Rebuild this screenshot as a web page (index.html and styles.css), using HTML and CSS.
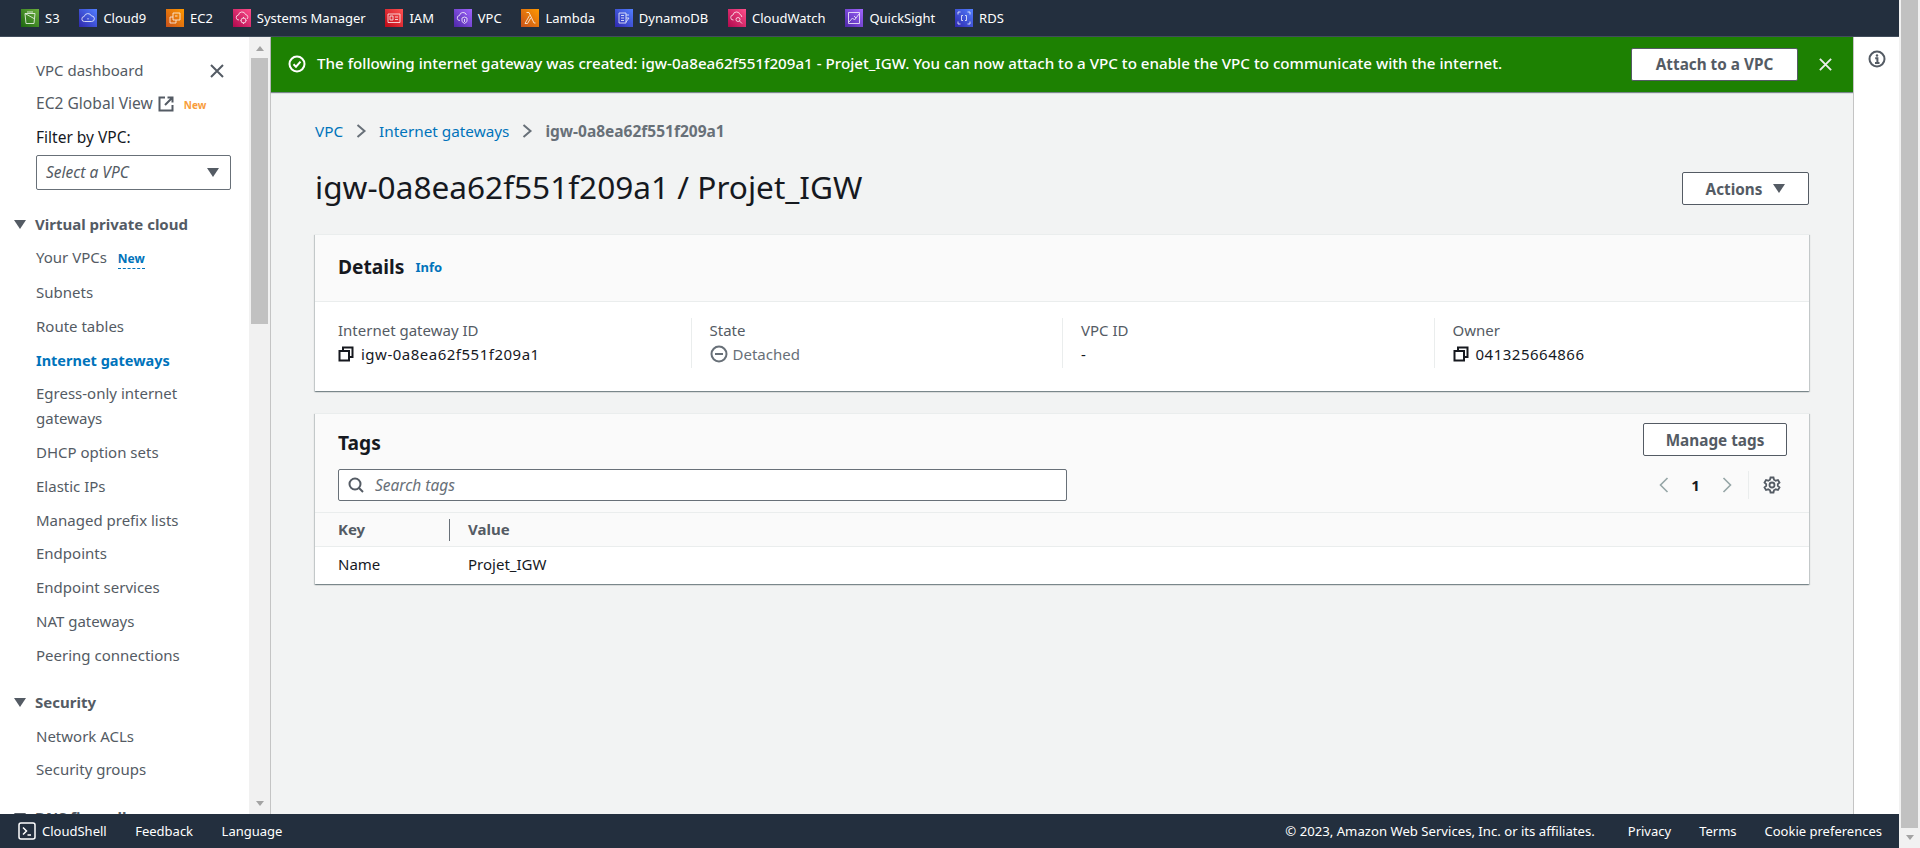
FILE: index.html
```html
<!DOCTYPE html>
<html lang="en">

<head>
    <meta charset="UTF-8">
    <meta name="viewport" content="width=device-width, initial-scale=1.0">
    <title>igw-0a8ea62f551f209a1 / Projet_IGW</title>
    <link rel="stylesheet" href="styles.css">
</head>

<body>
    <div class="app">
        <header class="topbar">
            <a class="service"><span class="svc green"><svg viewBox="0 0 18 18"><path d="M4 4.5h10l-1 10H5zM4 4.5l9 5" /><path d="M6 3h6" /></svg></span>S3</a>
            <a class="service"><span class="svc blue"><svg viewBox="0 0 18 18"><path d="M5.5 12.5a2.5 2.5 0 0 1-.3-5 3.8 3.8 0 0 1 7.2-.6 2.8 2.8 0 0 1 .3 5.6z" /><path d="M9 10.5V9" /></svg></span>Cloud9</a>
            <a class="service"><span class="svc orange"><svg viewBox="0 0 18 18"><path d="M7 4h7v7H7z" /><path d="M9 7h2.5" /><path d="M4 8h3M4 8v6h6v-3" /></svg></span>EC2</a>
            <a class="service"><span class="svc pink"><svg viewBox="0 0 18 18"><path d="M6 11a2.5 2.5 0 0 1-.5-5 3.6 3.6 0 0 1 7-.5 2.6 2.6 0 0 1 1.5 4.5" /><circle cx="10.5" cy="11.5" r="2.5" /><path d="M10.5 8v1.5M10.5 13.5V15M7.5 11.5h1M12.5 11.5h1" /></svg></span>Systems Manager</a>
            <a class="service"><span class="svc red"><svg viewBox="0 0 18 18"><path d="M3 5h12v8.5H3z" /><path d="M5 7h3v4H5zM10 8h3M10 10.5h3" /></svg></span>IAM</a>
            <a class="service"><span class="svc purple"><svg viewBox="0 0 18 18"><path d="M6 11.5a2.5 2.5 0 0 1-.5-5 3.6 3.6 0 0 1 7-.5" /><path d="M8 9l2.5-1 2.5 1v3.5l-2.5 2-2.5-2z" /><path d="M10.5 10v3" /></svg></span>VPC</a>
            <a class="service"><span class="svc orange"><svg viewBox="0 0 18 18"><path d="M5.5 3.5H8l5 10.5h1.5M8.5 6.5L4 14.5h2.5l3.2-5.5" /></svg></span>Lambda</a>
            <a class="service"><span class="svc blue"><svg viewBox="0 0 18 18"><path d="M4 4h7v10H4zM6 6.5h3M6 9h3M6 11.5h3" /><path d="M11 6h3M11 9h3l-3 4" /></svg></span>DynamoDB</a>
            <a class="service"><span class="svc pink"><svg viewBox="0 0 18 18"><path d="M5.5 11a2.5 2.5 0 0 1-.5-5 3.6 3.6 0 0 1 7-.5 2.6 2.6 0 0 1 1.8 2.5" /><circle cx="10" cy="10.5" r="2" /><path d="M11.5 12l2.5 2.5" /></svg></span>CloudWatch</a>
            <a class="service"><span class="svc purple"><svg viewBox="0 0 18 18"><path d="M3.5 3.5h11v11h-11z" /><path d="M4 13l3.5-4 2 2 4.5-6M9 7l2 2" /></svg></span>QuickSight</a>
            <a class="service"><span class="svc blue"><svg viewBox="0 0 18 18"><path d="M3 5.5V3h2.5M12.5 3H15v2.5M15 12.5V15h-2.5M5.5 15H3v-2.5" /><path d="M8 6.5H6.5v5H8M10 6.5h1.5v5H10" /></svg></span>RDS</a>
        </header>

        <div class="main">
            <aside class="sidebar">
                <nav class="side-nav">
                    <div class="nav-row">
                        <a class="nav-item">VPC dashboard</a>
                        <svg class="side-close" viewBox="0 0 16 16"><path d="M2 2l12 12M14 2L2 14" /></svg>
                    </div>
                    <a class="nav-item global">EC2 Global View
                        <svg class="external" viewBox="0 0 16 16"><path d="M7 1.5H1.5v13h13V9" /><path d="M9.5 1.5h5v5M14.5 1.5L7 9" /></svg>
                        <span class="new-orange">New</span>
                    </a>
                    <label class="filter-label">Filter by VPC:</label>
                    <div class="select-box"><span>Select a VPC</span><i class="caret"></i></div>

                    <h3 class="nav-head first"><i class="caret"></i>Virtual private cloud</h3>
                    <a class="nav-item">Your VPCs <span class="new-blue">New</span></a>
                    <a class="nav-item">Subnets</a>
                    <a class="nav-item">Route tables</a>
                    <a class="nav-item active">Internet gateways</a>
                    <a class="nav-item">Egress-only internet gateways</a>
                    <a class="nav-item">DHCP option sets</a>
                    <a class="nav-item">Elastic IPs</a>
                    <a class="nav-item">Managed prefix lists</a>
                    <a class="nav-item">Endpoints</a>
                    <a class="nav-item">Endpoint services</a>
                    <a class="nav-item">NAT gateways</a>
                    <a class="nav-item">Peering connections</a>

                    <h3 class="nav-head"><i class="caret"></i>Security</h3>
                    <a class="nav-item">Network ACLs</a>
                    <a class="nav-item">Security groups</a>

                    <h3 class="nav-head"><i class="caret"></i>DNS firewall</h3>
                </nav>
                <div class="scrollbar side-scroll">
                    <i class="arrow-up"></i>
                    <div class="thumb"></div>
                    <i class="arrow-down"></i>
                </div>
            </aside>

            <main class="content">
                <div class="banner">
                    <svg class="banner-icon" viewBox="0 0 18 18"><circle cx="9" cy="9" r="7.5" /><path d="M5.5 9.2l2.5 2.5 4.5-5" /></svg>
                    <span class="banner-text">The following internet gateway was created: igw-0a8ea62f551f209a1 - Projet_IGW. You can now attach to a VPC to enable the VPC to communicate with the internet.</span>
                    <button class="btn banner-btn">Attach to a VPC</button>
                    <svg class="banner-close" viewBox="0 0 16 16"><path d="M2 2l12 12M14 2L2 14" /></svg>
                </div>

                <div class="page">
                    <div class="breadcrumb">
                        <a>VPC</a>
                        <svg class="crumb-sep" viewBox="0 0 12 16"><path d="M2.5 2l7 6-7 6" /></svg>
                        <a>Internet gateways</a>
                        <svg class="crumb-sep" viewBox="0 0 12 16"><path d="M2.5 2l7 6-7 6" /></svg>
                        <span>igw-0a8ea62f551f209a1</span>
                    </div>

                    <div class="title-row">
                        <h1>igw-0a8ea62f551f209a1 / Projet_IGW</h1>
                        <button class="btn actions">Actions <i class="caret"></i></button>
                    </div>

                    <section class="card">
                        <div class="card-head details-head">
                            <h2>Details</h2>
                            <a class="info">Info</a>
                        </div>
                        <div class="details-grid">
                            <div class="detail">
                                <div class="detail-label">Internet gateway ID</div>
                                <div class="detail-value num">
                                    <svg class="copy" viewBox="0 0 16 16"><path d="M5 5V1.5h9.5V11H11" /><path d="M1.5 5H11v9.5H1.5z" /></svg>
                                    igw-0a8ea62f551f209a1
                                </div>
                            </div>
                            <div class="detail">
                                <div class="detail-label">State</div>
                                <div class="detail-value muted">
                                    <svg class="detached" viewBox="0 0 18 18"><circle cx="9" cy="9" r="7.5" /><path d="M5 9h8" /></svg>
                                    Detached
                                </div>
                            </div>
                            <div class="detail">
                                <div class="detail-label">VPC ID</div>
                                <div class="detail-value">-</div>
                            </div>
                            <div class="detail">
                                <div class="detail-label">Owner</div>
                                <div class="detail-value num">
                                    <svg class="copy" viewBox="0 0 16 16"><path d="M5 5V1.5h9.5V11H11" /><path d="M1.5 5H11v9.5H1.5z" /></svg>
                                    041325664866
                                </div>
                            </div>
                        </div>
                    </section>

                    <section class="card tags">
                        <div class="card-head tags-head">
                            <div class="tags-top">
                                <h2>Tags</h2>
                                <button class="btn manage">Manage tags</button>
                            </div>
                            <div class="tags-tools">
                                <div class="search">
                                    <svg class="search-icon" viewBox="0 0 16 16"><circle cx="7" cy="7" r="5.5" /><path d="M11 11l4 4" /></svg>
                                    <span>Search tags</span>
                                </div>
                                <div class="pager">
                                    <svg class="pager-arrow" viewBox="0 0 12 18"><path d="M9.5 2l-7 7 7 7" /></svg>
                                    <span class="page-num">1</span>
                                    <svg class="pager-arrow" viewBox="0 0 12 18"><path d="M2.5 2l7 7-7 7" /></svg>
                                    <div class="gear-wrap">
                                        <svg class="gear" viewBox="0 0 18 18"><path d="M7.5 1.5h3l.5 2.2 1.8 1 2.2-.7 1.5 2.6-1.7 1.5v1.8l1.7 1.5-1.5 2.6-2.2-.7-1.8 1-.5 2.2h-3l-.5-2.2-1.8-1-2.2.7-1.5-2.6 1.7-1.5V8.1L1.5 6.6 3 4l2.2.7 1.8-1z" /><circle cx="9" cy="9" r="2.5" /></svg>
                                    </div>
                                </div>
                            </div>
                        </div>
                        <div class="tag-row tag-header">
                            <div class="tag-key">Key</div>
                            <div class="tag-value">Value</div>
                        </div>
                        <div class="tag-row">
                            <div class="tag-key">Name</div>
                            <div class="tag-value">Projet_IGW</div>
                        </div>
                    </section>
                </div>
            </main>

            <aside class="tools">
                <svg class="tools-info" viewBox="0 0 18 18"><circle cx="9" cy="9" r="7.5" /><circle class="dot" cx="9" cy="5.5" r="1.2" /><path d="M7.2 8.3H9.4V13M7 13h4.5" /></svg>
            </aside>
        </div>

        <footer class="footer">
            <div class="footer-left">
                <a class="shell">
                    <svg class="shell-icon" viewBox="0 0 18 18"><rect x="1" y="1" width="16" height="16" rx="2" /><path d="M5 5.5L8.5 9 5 12.5M9.5 13H13" /></svg>
                    CloudShell
                </a>
                <a>Feedback</a>
                <a>Language</a>
            </div>
            <div class="footer-right">
                <span class="copyright">© 2023, Amazon Web Services, Inc. or its affiliates.</span>
                <a>Privacy</a>
                <a>Terms</a>
                <a>Cookie preferences</a>
            </div>
        </footer>
    </div>

    <div class="scrollbar page-scroll">
        <div class="thumb"></div>
        <i class="arrow-down"></i>
    </div>
</body>

</html>
```

FILE: styles.css
```css
* {
    box-sizing: border-box;
}

html, body {
    height: 100%;
}

body {
    margin: 0;
    display: flex;
    overflow: hidden;
    font-family: "Noto Sans", sans-serif;
    font-size: 15px;
    color: #16191f;
    background-color: #fff;
}

svg {
    fill: none;
    stroke: currentColor;
    flex: none;
}

.app {
    flex: 1;
    min-width: 0;
    display: flex;
    flex-direction: column;
}

/* Top bar */
.topbar {
    height: 37px;
    flex: none;
    display: flex;
    align-items: center;
    padding: 0 0 0 21px;
    gap: 19.8px;
    background-color: #232f3e;
    border-bottom: 1px solid #414d5c;
    color: #fff;
    font-size: 13px;
}

.service {
    display: flex;
    align-items: center;
    gap: 6px;
    white-space: nowrap;
}

.svc {
    width: 18px;
    height: 18px;
    display: block;
    color: #fff;
}

.svc svg {
    display: block;
    width: 18px;
    height: 18px;
    stroke-width: 0.9;
    opacity: 0.85;
}

.green { background: linear-gradient(45deg, #1b660f, #6cae3e); }
.blue { background: linear-gradient(45deg, #2e27ad, #527fff); }
.orange { background: linear-gradient(45deg, #c8511b, #ff9900); }
.pink { background: linear-gradient(45deg, #b0084d, #ff4f8b); }
.red { background: linear-gradient(45deg, #bd0816, #ff5252); }
.purple { background: linear-gradient(45deg, #4d27a8, #a166ff); }

.main {
    flex: 1;
    min-height: 0;
    display: flex;
}

/* Left navigation */
.sidebar {
    width: 271px;
    flex: none;
    display: flex;
    border-right: 1px solid #c4c4c4;
    background-color: #fff;
}

.side-nav {
    flex: 1;
    min-width: 0;
    overflow: hidden;
    padding: 20.5px 0 0 36px;
    color: #545b64;
    line-height: 25px;
}

.nav-row {
    display: flex;
    justify-content: space-between;
    align-items: flex-start;
    padding-right: 24px;
}

.nav-item {
    display: block;
    margin-bottom: 8.75px;
    padding-right: 20px;
}

.side-close {
    width: 16px;
    height: 16px;
    margin: 5px 0 0;
    stroke: #545b64;
    stroke-width: 2;
}

.global {
    display: flex;
    align-items: center;
    font-size: 15.6px;
    white-space: nowrap;
}

.external {
    width: 16px;
    height: 16px;
    margin-left: 5px;
    stroke-width: 2;
}

.new-orange {
    margin: 3px 0 0 10px;
    color: #f89c3b;
    font-size: 10px;
    font-weight: 700;
    line-height: 19px;
}

.new-blue {
    margin-left: 7px;
    color: #0073bb;
    font-size: 12px;
    font-weight: 700;
    border-bottom: 1px dashed #0073bb;
    padding-bottom: 1px;
}

.filter-label {
    display: block;
    color: #16191f;
    font-size: 15.5px;
    margin-bottom: 5px;
}

.select-box {
    width: 195px;
    height: 35px;
    display: flex;
    align-items: center;
    justify-content: space-between;
    padding: 0 11px 0 9px;
    border: 1px solid #687078;
    border-radius: 2px;
    font-size: 15.5px;
    font-style: italic;
}

.caret {
    display: inline-block;
    width: 0;
    height: 0;
    border-left: 6px solid transparent;
    border-right: 6px solid transparent;
    border-top: 9px solid #545b64;
}

.nav-head {
    position: relative;
    margin: 22.25px 0 8.75px -1px;
    font-size: 15px;
    font-weight: 700;
    line-height: 25px;
}

.nav-head.first {
    margin-top: 21.5px;
}

.nav-head .caret {
    position: absolute;
    left: -21px;
    top: 8px;
}

.nav-item.active {
    color: #0073bb;
    font-size: 14.5px;
    font-weight: 700;
}

/* Scrollbars */
.scrollbar {
    width: 21px;
    flex: none;
    display: flex;
    flex-direction: column;
    align-items: center;
    background-color: #f1f1f1;
}

.thumb {
    width: 17px;
    background-color: #c1c1c1;
}

.side-scroll .thumb {
    height: 266px;
}

.side-scroll .arrow-up {
    margin: 9px 0 7px;
}

.page-scroll .thumb {
    height: 828px;
}

.arrow-up, .arrow-down {
    width: 0;
    height: 0;
    border-left: 4.5px solid transparent;
    border-right: 4.5px solid transparent;
}

.arrow-up {
    border-bottom: 5px solid #a3a3a3;
}

.arrow-down {
    border-top: 5px solid #a3a3a3;
    margin-top: auto;
    margin-bottom: 8px;
}

/* Content */
.content {
    flex: 1;
    min-width: 0;
    display: flex;
    flex-direction: column;
    background-color: #f2f3f3;
}

.banner {
    height: 55px;
    flex: none;
    display: flex;
    align-items: center;
    padding: 0 20px 1px 17px;
    background-color: #1d8102;
    box-shadow: 0 1px 1px rgba(0, 28, 36, 0.5);
    color: #fff;
}

.banner-icon {
    width: 18px;
    height: 18px;
    stroke-width: 2;
    margin-right: 11px;
}

.banner-text {
    flex: 1;
    padding-bottom: 2px;
    font-size: 15.17px;
    font-weight: 500;
    white-space: nowrap;
}

.btn {
    display: inline-flex;
    align-items: center;
    justify-content: center;
    padding: 0;
    font-family: inherit;
    font-size: 15.3px;
    font-weight: 700;
    color: #545b64;
    background-color: #fff;
    border: 1px solid #545b64;
    border-radius: 2px;
}

.banner-btn {
    width: 167px;
    height: 33px;
    margin-right: 20px;
}

.banner-close {
    width: 15px;
    height: 15px;
    stroke-width: 2;
    stroke: #eaeded;
}

.page {
    flex: 1;
    padding: 26.5px 44px 0 44px;
}

.breadcrumb {
    display: flex;
    align-items: center;
    line-height: 25px;
    color: #687078;
    font-size: 15.5px;
    font-weight: 700;
}

.breadcrumb a {
    color: #0073bb;
    font-size: 15.3px;
    font-weight: 400;
}

.crumb-sep {
    width: 12px;
    height: 16px;
    margin: 0 12px;
    stroke: #687078;
    stroke-width: 2;
}

.title-row {
    display: flex;
    align-items: center;
    justify-content: space-between;
    margin-top: 24.5px;
    height: 41px;
}

h1 {
    margin: 0 0 4px;
    font-size: 31.6px;
    font-weight: 400;
    line-height: 40px;
}

.actions {
    width: 127px;
    height: 33px;
    gap: 11px;
}

.card {
    margin-top: 25px;
    background-color: #fff;
    border-top: 1px solid #eaeded;
    box-shadow: 0 1px 1px rgba(0, 28, 36, 0.3), 1px 1px 1px rgba(0, 28, 36, 0.15), -1px 1px 1px rgba(0, 28, 36, 0.15);
}

.card-head {
    background-color: #fafafa;
    border-bottom: 1px solid #eaeded;
}

h2 {
    margin: 0;
    font-size: 19.2px;
    font-weight: 700;
    line-height: 25px;
}

.details-head {
    height: 67px;
    display: flex;
    align-items: center;
    gap: 11px;
    padding: 0 23px 3px;
}

.info {
    color: #0073bb;
    font-size: 13px;
    font-weight: 700;
}

.details-grid {
    display: grid;
    grid-template-columns: repeat(4, 1fr);
    padding: 16px 4px 23px;
}

.detail {
    height: 50px;
    padding-left: 18px;
    border-left: 1px solid #eaeded;
    line-height: 24px;
}

.detail:first-child {
    padding-left: 19px;
    border-left: 0;
}

.detail-label {
    color: #545b64;
}

.detail-value {
    display: flex;
    align-items: center;
    gap: 7px;
}

.num {
    letter-spacing: 0.5px;
}

.copy {
    width: 16px;
    height: 16px;
    stroke-width: 2;
}

.muted {
    color: #687078;
}

.detached {
    width: 18px;
    height: 18px;
    stroke-width: 2;
    margin-right: -2px;
}

.tags {
    margin-top: 22px;
}

.tags-head {
    padding: 9px 22px 12px 23px;
    height: 99px;
}

.tags-top {
    display: flex;
    align-items: center;
    justify-content: space-between;
    height: 33px;
}

.tags-top h2 {
    margin-top: 6px;
}

.manage {
    width: 144px;
    height: 33px;
}

.tags-tools {
    display: flex;
    align-items: center;
    justify-content: space-between;
    margin-top: 13px;
}

.search {
    width: 729px;
    height: 32px;
    display: flex;
    align-items: center;
    gap: 11px;
    padding: 0 9px;
    background-color: #fff;
    border: 1px solid #687078;
    border-radius: 2px;
    color: #687078;
    font-size: 15.5px;
    font-style: italic;
}

.search-icon {
    width: 16px;
    height: 16px;
    stroke: #545b64;
    stroke-width: 2;
}

.pager {
    display: flex;
    align-items: center;
}

.pager-arrow {
    width: 12px;
    height: 18px;
    stroke: #95a5a6;
    stroke-width: 1.6;
}

.page-num {
    width: 51px;
    text-align: center;
    font-weight: 700;
}

.gear-wrap {
    display: flex;
    align-items: center;
    margin-left: 15px;
    padding: 5px 6px 5px 14px;
    border-left: 1px solid #eaeded;
    color: #545b64;
}

.gear {
    width: 18px;
    height: 18px;
    stroke-width: 1.8;
}

.tag-row {
    display: flex;
    align-items: center;
    height: 37px;
    padding: 0 0 3px 23px;
}

.tag-key {
    width: 130px;
}

.tag-header {
    height: 34px;
    padding-bottom: 2px;
    background-color: #fafafa;
    border-bottom: 1px solid #eaeded;
    color: #545b64;
    font-weight: 700;
}

.tag-header .tag-value {
    position: relative;
}

.tag-header .tag-value::before {
    content: "";
    position: absolute;
    left: -19px;
    top: 0;
    height: 22px;
    border-left: 1px solid #687078;
}

/* Right tools panel */
.tools {
    width: 46px;
    flex: none;
    padding: 13px 0 0 14px;
    border-left: 1px solid #c4c4c4;
    background-color: #fff;
    color: #545b64;
}

.tools-info {
    display: block;
    width: 18px;
    height: 18px;
    stroke-width: 2;
}

.tools-info .dot {
    fill: currentColor;
    stroke: none;
}

/* Footer */
.footer {
    height: 34px;
    flex: none;
    display: flex;
    align-items: center;
    justify-content: space-between;
    padding: 0 17px 0 18px;
    background-color: #232f3e;
    color: #fff;
    font-size: 13px;
    position: relative;
    z-index: 1;
}

.footer-left, .footer-right {
    display: flex;
    align-items: center;
}

.footer-left {
    gap: 28.5px;
}

.footer-right {
    gap: 28px;
}

.copyright {
    margin-right: 5px;
    font-size: 13.15px;
}

.shell {
    display: flex;
    align-items: center;
    gap: 6px;
}

.shell-icon {
    width: 18px;
    height: 18px;
    stroke-width: 1.5;
}
```
